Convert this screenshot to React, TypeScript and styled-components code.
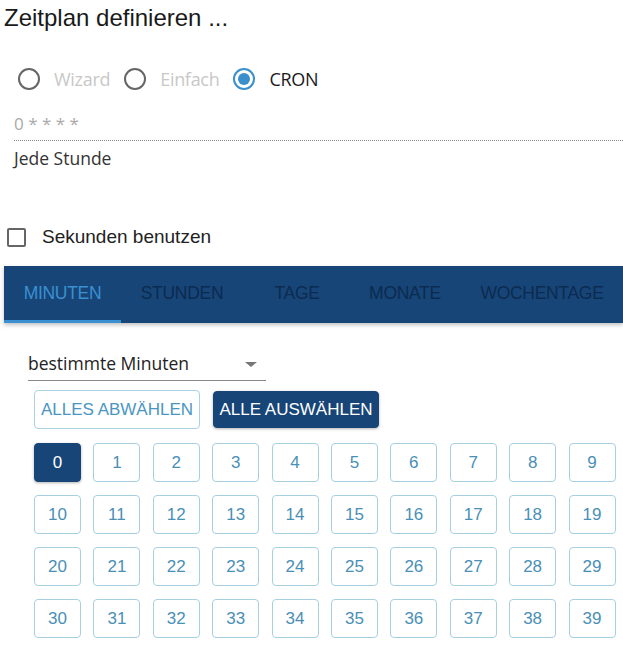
import React, { useState } from 'react';
import styled, { createGlobalStyle } from 'styled-components';

const GlobalStyle = createGlobalStyle`
  html, body {
    margin: 0;
    padding: 0;
    background: #fff;
    overflow: hidden;
  }
`;

const Page = styled.div`
  width: 623px;
  height: 647px;
  overflow: hidden;
  font-family: "Liberation Sans", Arial, sans-serif;
  color: #222;
`;

const Title = styled.h1`
  margin: 0;
  padding: 4px 0 0 4px;
  font-size: 24px;
  line-height: 27px;
  font-weight: normal;
  color: #1a1a1a;
`;

const RadioRow = styled.div`
  display: flex;
  align-items: center;
  margin: 35px 0 0 18px;
  height: 26px;
`;

const RadioItem = styled.label`
  display: flex;
  align-items: center;
  gap: 14px;
  margin-right: 14px;
`;

const RadioCircle = styled.span<{ checked?: boolean }>`
  box-sizing: border-box;
  width: 22px;
  height: 22px;
  border-radius: 50%;
  border: 2px solid ${({ checked }) => (checked ? '#3a8fcc' : '#666')};
  display: flex;
  align-items: center;
  justify-content: center;

  &::after {
    content: '';
    width: 12px;
    height: 12px;
    border-radius: 50%;
    background: #3a8fcc;
    display: ${({ checked }) => (checked ? 'block' : 'none')};
  }
`;

const RadioLabel = styled.span<{ active?: boolean }>`
  font-family: "Open Sans", "Noto Sans", sans-serif;
  font-size: 18px;
  letter-spacing: -0.3px;
  color: ${({ active }) => (active ? '#1a1a1a' : '#c8c8c8')};
`;

const CronBlock = styled.div`
  margin: 20px 0 0 14px;
  font-family: "Open Sans", "Noto Sans", sans-serif;
  font-size: 17px;
`;

const CronInput = styled.div`
  color: #aaa;
  height: 24px;
  line-height: 24px;
  padding-bottom: 4px;
  border-bottom: 1px dotted #888;
`;

const CronText = styled.div`
  color: #333;
  margin-top: 4px;
  line-height: 26px;
  font-size: 17.5px;
`;

const CheckRow = styled.label`
  display: flex;
  align-items: center;
  gap: 16px;
  margin: 55px 0 0 7px;
  font-family: "Liberation Sans", Arial, sans-serif;
  font-size: 19px;
  color: #222;
`;

const CheckBox = styled.span`
  box-sizing: border-box;
  width: 19px;
  height: 19px;
  border: 2px solid #666;
  border-radius: 2px;
`;

const TabBar = styled.div`
  display: flex;
  height: 57px;
  margin: 18px 0 0 4px;
  background: #174577;
  box-shadow: 0 2px 4px rgba(0, 0, 0, 0.25);
`;

const Tab = styled.div<{ w: number; active?: boolean }>`
  position: relative;
  flex: 0 0 ${({ w }) => w}px;
  display: flex;
  align-items: center;
  justify-content: center;
  padding-bottom: 3px;
  font-family: "Liberation Sans", Arial, sans-serif;
  font-size: 17.5px;
  letter-spacing: -0.3px;
  text-transform: uppercase;
  color: ${({ active }) => (active ? '#3a90d0' : '#0c2b50')};

  &::after {
    content: '';
    position: absolute;
    left: 0;
    right: 0;
    bottom: 0;
    height: 3px;
    background: #3a90d0;
    display: ${({ active }) => (active ? 'block' : 'none')};
  }
`;

const Content = styled.div`
  padding: 23px 0 0 28px;
`;

const Select = styled.div`
  width: 238px;
  height: 35px;
  display: flex;
  align-items: center;
  justify-content: space-between;
  border-bottom: 1px solid #888;
  box-sizing: border-box;
  font-family: "Open Sans", "Noto Sans", sans-serif;
  font-size: 17.5px;
  color: #222;
  padding-right: 9px;
`;

const Caret = styled.span`
  width: 0;
  height: 0;
  border-left: 6px solid transparent;
  border-right: 6px solid transparent;
  border-top: 5px solid #777;
  margin-top: 2px;
`;

const ButtonRow = styled.div`
  display: flex;
  align-items: center;
  gap: 13px;
  margin: 9px 0 0 6px;
`;

const Button = styled.button<{ filled?: boolean }>`
  box-sizing: border-box;
  width: 166px;
  height: ${({ filled }) => (filled ? 37 : 39)}px;
  border-radius: 4px;
  border: 1px solid ${({ filled }) => (filled ? '#174577' : '#a9d2e2')};
  background: ${({ filled }) => (filled ? '#174577' : '#fff')};
  color: ${({ filled }) => (filled ? '#fff' : '#4a96c0')};
  font-family: "Liberation Sans", Arial, sans-serif;
  font-size: 17px;
  padding: 0;
  box-shadow: ${({ filled }) => (filled ? '0 1px 3px rgba(0,0,0,0.3)' : 'none')};
`;

const Grid = styled.div`
  display: grid;
  grid-template-columns: repeat(10, 47px);
  grid-auto-rows: 39px;
  column-gap: 12.4px;
  row-gap: 13px;
  margin: 14px 0 0 6px;
`;

const Cell = styled.div<{ selected?: boolean }>`
  box-sizing: border-box;
  display: flex;
  align-items: center;
  justify-content: center;
  border-radius: 4px;
  border: 1px solid ${({ selected }) => (selected ? '#174577' : '#a6d0e0')};
  background: ${({ selected }) => (selected ? '#174577' : '#fff')};
  color: ${({ selected }) => (selected ? '#fff' : '#4a8fb5')};
  font-family: "Liberation Sans", Arial, sans-serif;
  font-size: 17px;
  box-shadow: ${({ selected }) => (selected ? '0 1px 3px rgba(0,0,0,0.3)' : 'none')};
`;

const tabs = [
  { label: 'Minuten', w: 117 },
  { label: 'Stunden', w: 122 },
  { label: 'Tage', w: 108 },
  { label: 'Monate', w: 108 },
  { label: 'Wochentage', w: 166 },
];

export default function App() {
  const [mode] = useState('cron');
  const [selected] = useState<number[]>([0]);

  return (
    <Page>
      <GlobalStyle />
      <Title>Zeitplan definieren ...</Title>
      <RadioRow>
        {[
          { id: 'wizard', label: 'Wizard' },
          { id: 'simple', label: 'Einfach' },
          { id: 'cron', label: 'CRON' },
        ].map(({ id, label }) => (
          <RadioItem key={id}>
            <RadioCircle checked={mode === id} />
            <RadioLabel active={mode === id}>{label}</RadioLabel>
          </RadioItem>
        ))}
      </RadioRow>
      <CronBlock>
        <CronInput>0 * * * *</CronInput>
        <CronText>Jede Stunde</CronText>
      </CronBlock>
      <CheckRow>
        <CheckBox />
        Sekunden benutzen
      </CheckRow>
      <TabBar>
        {tabs.map((t, i) => (
          <Tab key={t.label} w={t.w} active={i === 0}>
            {t.label}
          </Tab>
        ))}
      </TabBar>
      <Content>
        <Select>
          bestimmte Minuten
          <Caret />
        </Select>
        <ButtonRow>
          <Button>ALLES ABWÄHLEN</Button>
          <Button filled>ALLE AUSWÄHLEN</Button>
        </ButtonRow>
        <Grid>
          {Array.from({ length: 40 }, (_, n) => (
            <Cell key={n} selected={selected.includes(n)}>
              {n}
            </Cell>
          ))}
        </Grid>
      </Content>
    </Page>
  );
}
